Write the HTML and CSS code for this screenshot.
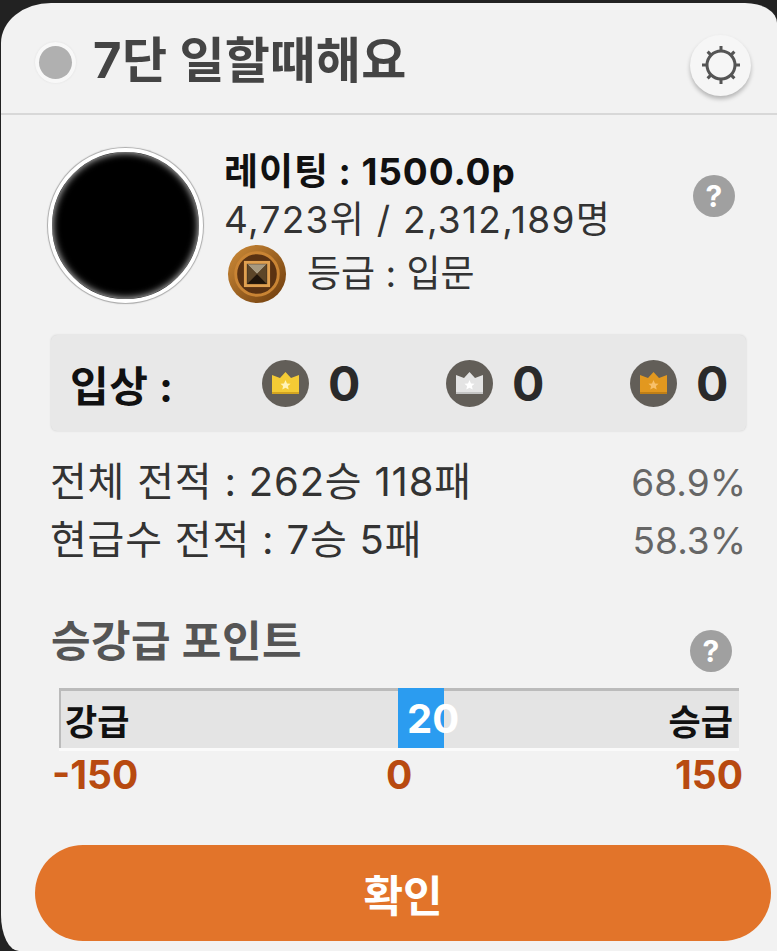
FILE: index.html
```html
<!DOCTYPE html>
<html lang="ko">
<head>
  <meta charset="UTF-8">
  <meta name="viewport" content="width=device-width, initial-scale=1.0">
  <title>프로필</title>
  <link rel="stylesheet" href="styles.css">
</head>
<body>
  <div class="card">
    <div class="header">
      <span class="status-dot"></span>
      <h1 class="nickname">7단 일할때해요</h1>
      <button class="gear-button" aria-label="설정">
        <svg width="40" height="40" viewBox="0 0 40 40" fill="none" stroke="#555" stroke-width="3">
          <circle cx="20" cy="20" r="14"/>
          <path d="M20 1v5M20 34v5M1 20h5M34 20h5M6.6 6.6l3.5 3.5M29.9 29.9l3.500 3.500M6.6 33.4l3.5-3.5M29.9 10.1l3.5-3.5"/>
        </svg>
      </button>
    </div>

    <div class="profile">
      <div class="avatar"></div>
      <div class="profile-info">
        <div class="rating">레이팅 : 1500.0p</div>
        <div class="rank">4,723위 / 2,312,189명</div>
        <div class="grade">
          <svg width="60" height="60" viewBox="0 0 62 62">
            <defs>
              <linearGradient id="rim" x1="0" y1="0" x2="1" y2="1">
                <stop offset="0" stop-color="#cf8c38"/>
                <stop offset="1" stop-color="#6b3a0c"/>
              </linearGradient>
            </defs>
            <circle cx="31" cy="31" r="30" fill="url(#rim)"/>
            <circle cx="31" cy="31" r="22" fill="#5a3212" stroke="#c98434" stroke-width="3"/>
            <rect x="19" y="19" width="24" height="24" fill="#3a2614" stroke="#e0a050" stroke-width="3"/>
            <path d="M21 21h20L31 31z" fill="#a89a80"/>
            <path d="M21 41h20L31 31z" fill="#1f140a"/>
            <path d="M21 21v20l10-10zM41 21v20L31 31z" fill="#5c4528"/>
          </svg>
          <span>등급 : 입문</span>
        </div>
      </div>
      <span class="help help-profile">?</span>
    </div>

    <div class="podium">
      <span class="podium-label">입상 :</span>
      <div class="medal">
        <svg class="crown" width="47" height="47" viewBox="0 0 47 47">
          <circle cx="23.5" cy="23.5" r="23.5" fill="#625e58"/>
          <path d="M10 34V15l8 3 5.500-6 5.500 6 8-3v19z" fill="#f4cb35"/>
          <rect x="10" y="32" width="27" height="2" fill="#d4a520"/>
          <path d="M23.500 20l1.500 3.400 3.600.3-2.700 2.400.8 3.500-3.200-1.900-3.200 1.900.8-3.500-2.700-2.400 3.600-.3z" fill="#fff3b8"/>
        </svg>
        <span class="medal-count">0</span>
      </div>
      <div class="medal">
        <svg class="crown" width="47" height="47" viewBox="0 0 47 47">
          <circle cx="23.5" cy="23.5" r="23.5" fill="#625e58"/>
          <path d="M10 34V15l8 3 5.500-6 5.500 6 8-3v19z" fill="#e4e4e4"/>
          <rect x="10" y="32" width="27" height="2" fill="#c4c4c4"/>
          <path d="M23.500 20l1.500 3.400 3.600.3-2.700 2.400.8 3.500-3.200-1.900-3.200 1.900.8-3.500-2.700-2.400 3.600-.3z" fill="#fff"/>
        </svg>
        <span class="medal-count">0</span>
      </div>
      <div class="medal">
        <svg class="crown" width="47" height="47" viewBox="0 0 47 47">
          <circle cx="23.5" cy="23.5" r="23.5" fill="#625e58"/>
          <path d="M10 34V15l8 3 5.500-6 5.500 6 8-3v19z" fill="#e2981f"/>
          <rect x="10" y="32" width="27" height="2" fill="#c07f16"/>
          <path d="M23.500 20l1.500 3.400 3.600.3-2.700 2.400.8 3.500-3.200-1.900-3.200 1.900.8-3.500-2.700-2.400 3.600-.3z" fill="#f8c06a"/>
        </svg>
        <span class="medal-count">0</span>
      </div>
    </div>

    <div class="stats">
      <div class="stat-row"><span>전체 전적 : 262승 118패</span><span class="stat-rate">68.9%</span></div>
      <div class="stat-row"><span>현급수 전적 : 7승 5패</span><span class="stat-rate">58.3%</span></div>
    </div>

    <div class="points-head">
      <h2 class="points-title">승강급 포인트</h2>
      <span class="help">?</span>
    </div>

    <div class="bar">
      <span class="bar-fill"></span>
      <span class="bar-value">20</span>
      <span class="bar-label">강급</span>
      <span class="bar-label">승급</span>
    </div>
    <div class="scale">
      <span>-150</span>
      <span class="scale-zero">0</span>
      <span>150</span>
    </div>

    <button class="confirm">확인</button>
  </div>
</body>
</html>
```

FILE: styles.css
```css
html, body {
  margin: 0;
  height: 951px;
  overflow: hidden;
}
body {
  background-color: #222;
  font-family: Inter, "Noto Sans CJK KR", sans-serif;
}
.card {
  box-sizing: border-box;
  width: 776px;
  height: 948px;
  margin: 3px 0 0 1px;
  background-color: #f2f2f2;
  border-radius: 50px 32px 0 18px / 40px 20px 0 36px;
}
.header {
  display: flex;
  align-items: center;
  box-sizing: border-box;
  height: 112px;
  padding: 0 26px 0 38px;
  border-bottom: 2px solid #d8d8d8;
}
.status-dot {
  width: 33px;
  height: 33px;
  margin-top: 8px;
  border-radius: 50%;
  background-color: #b0b0b0;
  box-shadow: 0 0 0 4px #f8f8f8, 0 0 2px 4px #ddd;
}
.nickname {
  margin: 6px 0 0 21px;
  flex: 1;
  font-size: 49px;
  line-height: 60px;
  letter-spacing: 0.4px;
  font-weight: 700;
  color: #444;
}
.gear-button {
  display: flex;
  align-items: center;
  justify-content: center;
  width: 61px;
  height: 61px;
  margin-top: 14px;
  padding: 0;
  border: none;
  border-radius: 50%;
  background-color: #f6f6f6;
  box-shadow: 0 3px 4px rgba(0,0,0,0.25);
}
.profile {
  display: flex;
  padding: 33px 42px 0 47px;
}
.avatar {
  flex: none;
  box-sizing: border-box;
  width: 155px;
  height: 155px;
  border: 4px solid #fff;
  border-radius: 50%;
  background-color: #000;
  box-shadow: 0 0 1px 1px #aaa, inset 0 0 7px 1px #bbb;
}
.profile-info {
  flex: 1;
  margin-left: 21px;
  font-size: 37px;
  color: #333;
}
.rating {
  line-height: 48px;
  letter-spacing: 0.9px;
  font-weight: 700;
  color: #111;
}
.rank {
  margin-top: 2px;
  line-height: 44px;
  letter-spacing: 1.3px;
}
.grade {
  display: flex;
  align-items: center;
  gap: 20px;
  margin: 2px 0 0 3px;
  line-height: 58px;
}
.help {
  display: block;
  flex: none;
  width: 42px;
  height: 42px;
  border-radius: 50%;
  background-color: #a0a0a0;
  color: #fff;
  font-size: 30px;
  font-weight: 700;
  line-height: 42px;
  text-align: center;
}
.help-profile {
  margin-top: 27px;
}
.podium {
  display: flex;
  align-items: center;
  box-sizing: border-box;
  width: 695px;
  height: 96px;
  margin: 31px 0 0 50px;
  padding-left: 19px;
  background-color: #e8e8e8;
  border-radius: 6px;
  box-shadow: 0 0 2px #ccc;
}
.podium-label {
  flex: none;
  width: 192px;
  font-size: 42px;
  letter-spacing: 0.6px;
  font-weight: 700;
  color: #111;
}
.medal {
  display: flex;
  flex: none;
  align-items: center;
  gap: 19px;
  width: 184px;
}
.medal:last-child {
  width: auto;
}
.crown {
  flex: none;
}
.medal-count {
  font-size: 48px;
  font-weight: 700;
  color: #2a2a2a;
}
.stats {
  box-sizing: border-box;
  width: 745px;
  margin: 22px 0 0 0;
  padding-left: 49px;
  font-size: 40px;
  line-height: 57px;
  letter-spacing: 0.8px;
  color: #333;
}
.stat-row {
  display: flex;
  justify-content: space-between;
  align-items: baseline;
}
.stat-rate {
  font-size: 37px;
  letter-spacing: 0;
  color: #666;
}
.points-head {
  display: flex;
  justify-content: space-between;
  box-sizing: border-box;
  width: 731px;
  margin-top: 44px;
  padding-left: 50px;
}
.points-title {
  margin: 0;
  font-size: 43px;
  line-height: 56px;
  letter-spacing: 0.5px;
  font-weight: 700;
  color: #555;
}
.points-head .help {
  margin-top: 17px;
}
.bar {
  position: relative;
  display: flex;
  justify-content: space-between;
  align-items: center;
  box-sizing: border-box;
  width: 680px;
  height: 60px;
  margin: 16px 0 0 58px;
  padding: 0 6px 0 4px;
  background-color: #e4e4e4;
  border-top: 3px solid #bbb;
  border-left: 2px solid #bbb;
  box-shadow: 0 3px 0 #fafafa;
}
.bar-label {
  position: relative;
  font-size: 35px;
  font-weight: 700;
  color: #111;
}
.bar-fill {
  position: absolute;
  left: 337px;
  top: -3px;
  width: 46px;
  height: 60px;
  background-color: #2b9cf0;
}
.bar-value {
  position: absolute;
  left: 346px;
  top: 0;
  font-size: 40px;
  line-height: 56px;
  font-weight: 700;
  color: #fff;
}
.scale {
  position: relative;
  display: flex;
  justify-content: space-between;
  box-sizing: border-box;
  width: 742px;
  margin-top: 1px;
  padding-left: 51px;
  font-size: 39px;
  line-height: 52px;
  font-weight: 700;
  color: #b84a10;
}
.scale-zero {
  position: absolute;
  left: 385px;
}
.confirm {
  display: block;
  width: 736px;
  height: 96px;
  margin: 44px 0 0 34px;
  border: none;
  border-radius: 48px;
  background-color: #e2742a;
  color: #fff;
  font-family: inherit;
  font-size: 43px;
  font-weight: 700;
}
```
